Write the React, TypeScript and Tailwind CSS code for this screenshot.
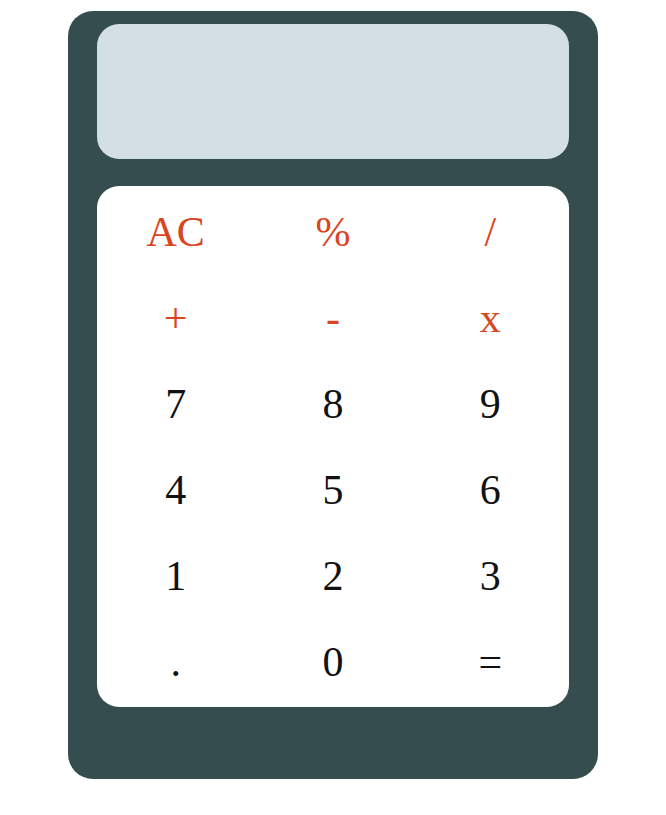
import * as React from 'react';

const keys: { label: string; op?: boolean }[] = [
  { label: 'AC', op: true },
  { label: '%', op: true },
  { label: '/', op: true },
  { label: '+', op: true },
  { label: '-', op: true },
  { label: 'x', op: true },
  { label: '7' },
  { label: '8' },
  { label: '9' },
  { label: '4' },
  { label: '5' },
  { label: '6' },
  { label: '1' },
  { label: '2' },
  { label: '3' },
  { label: '.' },
  { label: '0' },
  { label: '=' },
];

export default function App() {
  return (
    <div className="min-h-screen bg-white pt-[11px]">
      <div className="mx-auto w-[530px] h-[768px] rounded-[25px] bg-[#354d4e] px-[29px] pt-[13px]">
        {/* display */}
        <div className="h-[135px] rounded-[22px] bg-[#d3dfe2]" />

        {/* keypad */}
        <div className="mt-[27px] grid grid-cols-3 grid-rows-[repeat(6,86px)] rounded-[22px] bg-white pt-[3px] pb-[2px] font-['Liberation_Serif',serif] text-[42px]">
          {keys.map((k) => (
            <button
              key={k.label}
              className={`flex items-center justify-center leading-none ${
                k.op ? 'text-[#d8461f]' : 'text-[#111]'
              }`}
            >
              {k.label}
            </button>
          ))}
        </div>
      </div>
    </div>
  );
}
